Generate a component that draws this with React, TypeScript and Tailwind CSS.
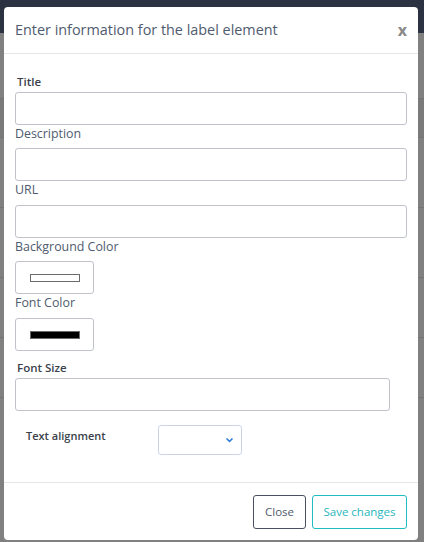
import React from "react";

const font = { fontFamily: '"Open Sans", "Noto Sans", sans-serif' };

const inputCls = "block h-[33px] rounded-[3px] border border-[#c1c3cc] bg-white outline-none";

function Label({ text, bold, className = "" }: { text: string; bold?: boolean; className?: string }) {
  return (
    <div
      className={
        (bold
          ? "pl-[2px] text-[11.5px] font-semibold leading-[18px] text-[#3a3f4b] "
          : "text-[12.4px] leading-[18px] text-[#4f5b6e] ") + className
      }
    >
      {text}
    </div>
  );
}

function ColorBox({ fill, className = "" }: { fill: string; className?: string }) {
  return (
    <div
      className={`flex h-[33px] w-[79px] items-center justify-center rounded-[3px] border border-[#c1c3cc] bg-white ${className}`}
    >
      <div className={`h-[8px] w-[50px] border border-[#6b6b6b] ${fill}`} />
    </div>
  );
}

export default function App() {
  return (
    <div className="relative h-[542px] w-[424px] overflow-hidden bg-[#808080]" style={font}>
      {/* dimmed page behind the modal */}
      <div className="h-[33px] bg-[#2b3242]" />
      <div className="h-[66px] border-b border-[#747474]" />
      <div className="h-[39px] border-b border-[#747474] bg-[#7a7a7a]" />
      <div className="h-[70px] border-b border-[#747474]" />
      <div className="h-[70px] border-b border-[#747474]" />
      <div className="h-[60px] border-b border-[#747474]" />
      <div className="h-[60px] border-b border-[#747474]" />

      <div className="absolute left-[4px] top-[7px] flex h-[533px] w-[414px] flex-col rounded-[4px] bg-white">
        <div className="flex h-[47px] shrink-0 items-center justify-between border-b border-[#e6e6ea] pl-[11px] pr-[11px]">
          <span className="text-[14.4px] text-[#4f5b6e]">Enter information for the label element</span>
          <span className="text-[16px] font-bold text-[#8a8a8a]">x</span>
        </div>

        <div className="flex flex-1 flex-col px-[11px] pt-[19px]">
          <Label text="Title" bold />
          <input className={`${inputCls} mt-[1px] w-[392px]`} />
          <Label text="Description" />
          <input className={`${inputCls} mt-[5px] w-[392px]`} />
          <Label text="URL" />
          <input className={`${inputCls} mt-[6px] w-[392px]`} />
          <Label text="Background Color" />
          <ColorBox fill="bg-white" className="mt-[5px]" />
          <Label text="Font Color" />
          <ColorBox fill="bg-black" className="mt-[6px]" />
          <Label text="Font Size" bold className="mt-[8px]" />
          <input className={`${inputCls} mt-[1px] w-[375px]`} />
          <div className="mt-[14px] flex items-start">
            <span className="ml-[11px] mt-[2px] w-[132px] text-[11px] font-semibold leading-[18px] text-[#3a3f4b]">
              Text alignment
            </span>
            <div className="flex h-[30px] w-[84px] items-center justify-end rounded-[3px] border border-[#cdd3e6] pr-[7px]">
              <svg width="9" height="6" viewBox="0 0 9 6" fill="none">
                <path d="M1.5 1.5L4.5 4.3L7.5 1.5" stroke="#2f7fd8" strokeWidth="1.6" />
              </svg>
            </div>
          </div>
        </div>

        <div className="flex h-[58px] shrink-0 items-center justify-end gap-[6px] border-t border-[#e6e6ea] pr-[11px]">
          <button className="h-[34px] w-[53px] rounded-[3px] border border-[#4a5063] text-[11.5px] text-[#4f5b6e]">
            Close
          </button>
          <button className="h-[34px] w-[95px] rounded-[3px] border border-[#1fbcc0] text-[11.5px] text-[#1fb6bd]">
            Save changes
          </button>
        </div>
      </div>
    </div>
  );
}
